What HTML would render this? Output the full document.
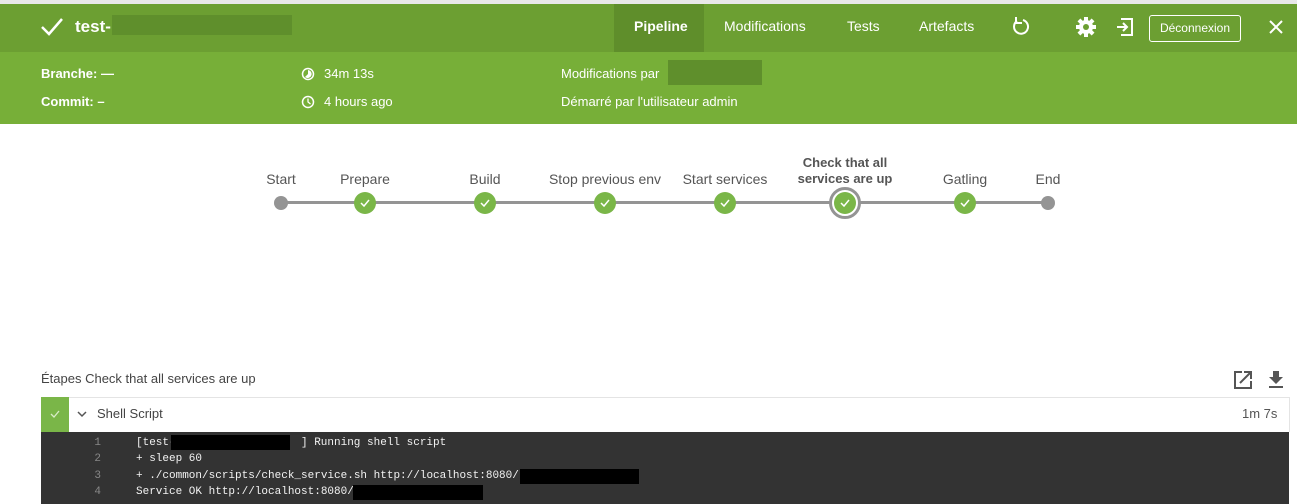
<!DOCTYPE html>
<html><head><meta charset="utf-8"><style>
body{margin:0;width:1297px;height:504px;overflow:hidden;background:#fff;font-family:"Liberation Sans",sans-serif;position:relative}
.a{position:absolute;white-space:nowrap}
.top{left:0;top:0;width:1297px;height:4px;background:#e8e8e8}
.hd{left:0;top:4px;width:1297px;height:48px;background:#6c9f32}
.sub{left:0;top:52px;width:1297px;height:72px;background:#77af38}
.w{color:#fff;font-size:14px}
.b{font-weight:bold}
.lbl{color:#555;font-size:14px;transform:translateX(-50%);text-align:center}
.dot{width:22px;height:22px;border-radius:50%;background:#7ab648;transform:translate(-50%,-50%)}
.dot svg{position:absolute;left:5px;top:5px}
.mono{font-family:"Liberation Mono",monospace;font-size:11px;color:#f2f2f2}
.ln{font-family:"Liberation Mono",monospace;font-size:11px;color:#888;text-align:right;width:20px}
.red{background:#000}
</style></head><body>
<div class="a top"></div>
<div class="a hd"></div>
<div class="a sub"></div>
<svg class="a" style="left:40px;top:17px" width="24" height="20"><path d="M2 10l7 7L22 2" stroke="#fff" stroke-width="2.5" fill="none"/></svg>
<div class="a w b" style="left:75px;top:17px;font-size:17px">test-</div>
<div class="a" style="left:112px;top:15px;width:180px;height:20px;background:#5f8f2c"></div>
<div class="a" style="left:614px;top:4px;width:90px;height:48px;background:#5f8e2b"></div>
<div class="a w b" style="left:634px;top:18px">Pipeline</div>
<div class="a w" style="left:724px;top:18px">Modifications</div>
<div class="a w" style="left:847px;top:18px">Tests</div>
<div class="a w" style="left:919px;top:18px">Artefacts</div>
<svg class="a" style="left:1011px;top:16px" width="20" height="22"><path d="M6 5A7 7 0 1 0 12 4" stroke="#fff" stroke-width="2" fill="none"/><path d="M5 1v6h6" stroke="#fff" stroke-width="2" fill="none"/></svg>
<svg class="a" style="left:1076px;top:17px" width="20" height="20" viewBox="0 0 20 20"><g fill="#fff"><circle cx="10" cy="10" r="7"/><rect x="8" y="0" width="4" height="20"/><rect x="0" y="8" width="20" height="4"/><rect x="8" y="0" width="4" height="20" transform="rotate(45 10 10)"/><rect x="8" y="0" width="4" height="20" transform="rotate(-45 10 10)"/></g><circle cx="10" cy="10" r="3" fill="#6c9f32"/></svg>
<svg class="a" style="left:1115px;top:17px" width="20" height="20"><path d="M6 2h11v16H6M2 10h10M8 6l4 4-4 4" stroke="#fff" stroke-width="2" fill="none"/></svg>
<div class="a" style="left:1149px;top:15px;width:90px;height:25px;border:1px solid #fff;border-radius:3px;color:#fff;font-size:12px;text-align:center;line-height:25px">Déconnexion</div>
<svg class="a" style="left:1268px;top:19px" width="16" height="16"><path d="M2 2l12 12M14 2L2 14" stroke="#fff" stroke-width="2"/></svg>
<div class="a w b" style="left:41px;top:66px;font-size:13px">Branche: —</div>
<div class="a w b" style="left:41px;top:94px;font-size:13px">Commit: –</div>
<svg class="a" style="left:301px;top:67px" width="14" height="14"><circle cx="7" cy="7" r="5.5" stroke="#fff" stroke-width="1.5" fill="none"/><path d="M7 7V3A4 4 0 1 1 4 10z" fill="#fff"/></svg>
<div class="a w" style="left:324px;top:66px;font-size:13px">34m 13s</div>
<svg class="a" style="left:301px;top:95px" width="14" height="14"><circle cx="7" cy="7" r="5.5" stroke="#fff" stroke-width="1.5" fill="none"/><path d="M7 3.5V7l2.5 2" stroke="#fff" stroke-width="1.3" fill="none"/></svg>
<div class="a w" style="left:324px;top:94px;font-size:13px">4 hours ago</div>
<div class="a w" style="left:561px;top:66px;font-size:13px">Modifications par</div>
<div class="a" style="left:668px;top:60px;width:94px;height:25px;background:#5f8f2c"></div>
<div class="a w" style="left:561px;top:94px;font-size:13px">Démarré par l'utilisateur admin</div>

<div class="a" style="left:281px;top:201px;width:767px;height:3px;background:#949494"></div>
<div class="a lbl" style="left:281px;top:171px">Start</div>
<div class="a lbl" style="left:365px;top:171px">Prepare</div>
<div class="a lbl" style="left:485px;top:171px">Build</div>
<div class="a lbl" style="left:605px;top:171px">Stop previous env</div>
<div class="a lbl" style="left:725px;top:171px">Start services</div>
<div class="a lbl b" style="left:845px;top:155px;font-size:13px;line-height:16px">Check that all<br>services are up</div>
<div class="a lbl" style="left:965px;top:171px">Gatling</div>
<div class="a lbl" style="left:1048px;top:171px">End</div>
<div class="a" style="left:274px;top:196px;width:14px;height:14px;border-radius:50%;background:#949494"></div>
<div class="a" style="left:1041px;top:196px;width:14px;height:14px;border-radius:50%;background:#949494"></div>
<div class="a dot" style="left:365px;top:203px"><svg width="12" height="12"><path d="M2 6l3 3 5-6" stroke="#fff" stroke-width="1.5" fill="none"/></svg></div>
<div class="a dot" style="left:485px;top:203px"><svg width="12" height="12"><path d="M2 6l3 3 5-6" stroke="#fff" stroke-width="1.5" fill="none"/></svg></div>
<div class="a dot" style="left:605px;top:203px"><svg width="12" height="12"><path d="M2 6l3 3 5-6" stroke="#fff" stroke-width="1.5" fill="none"/></svg></div>
<div class="a dot" style="left:725px;top:203px"><svg width="12" height="12"><path d="M2 6l3 3 5-6" stroke="#fff" stroke-width="1.5" fill="none"/></svg></div>
<div class="a dot" style="left:965px;top:203px"><svg width="12" height="12"><path d="M2 6l3 3 5-6" stroke="#fff" stroke-width="1.5" fill="none"/></svg></div>
<div class="a" style="left:829px;top:187px;width:26px;height:26px;border-radius:50%;border:3px solid #949494;background:#fff"></div>
<div class="a dot" style="left:845px;top:203px;width:22px;height:22px"><svg width="12" height="12"><path d="M2 6l3 3 5-6" stroke="#fff" stroke-width="1.5" fill="none"/></svg></div>

<div class="a" style="left:41px;top:371px;font-size:13px;color:#444">Étapes Check that all services are up</div>
<svg class="a" style="left:1234px;top:371px" width="18" height="18"><path d="M8 1H1v16h16v-7" stroke="#555" stroke-width="2" fill="none"/><path d="M6 12L16 2M10 1h7v7" stroke="#555" stroke-width="2" fill="none"/></svg>
<svg class="a" style="left:1268px;top:370px" width="16" height="19"><path d="M5 1h6v6h4l-7 7-7-7h4z" fill="#555"/><rect x="1" y="16" width="14" height="2" fill="#555"/></svg>
<div class="a" style="left:41px;top:397px;width:1247px;height:34px;border:1px solid #e4e4e4;border-bottom:none"></div>
<div class="a" style="left:41px;top:397px;width:28px;height:35px;background:#7ab648"></div>
<svg class="a" style="left:49px;top:408px" width="12" height="12"><path d="M2 6l3 3 5-6" stroke="#d9ecc7" stroke-width="1.3" fill="none"/></svg>
<svg class="a" style="left:77px;top:410px" width="10" height="8"><path d="M1 2l4 4 4-4" stroke="#555" stroke-width="1.5" fill="none"/></svg>
<div class="a" style="left:97px;top:406px;font-size:13px;color:#444">Shell Script</div>
<div class="a" style="left:1242px;top:406px;font-size:13px;color:#555">1m 7s</div>
<div class="a" style="left:41px;top:432px;width:1248px;height:72px;background:#333"></div>
<div class="a ln" style="left:81px;top:437px">1</div>
<div class="a ln" style="left:81px;top:453px">2</div>
<div class="a ln" style="left:81px;top:470px">3</div>
<div class="a ln" style="left:81px;top:486px">4</div>
<div class="a mono" style="left:136px;top:437px">[test-</div>
<div class="a mono" style="left:301px;top:437px">] Running shell script</div>
<div class="a red" style="left:171px;top:435px;width:119px;height:15px"></div>
<div class="a mono" style="left:136px;top:453px">+ sleep 60</div>
<div class="a mono" style="left:136px;top:470px">+ ./common/scripts/check_service.sh http://localhost:8080/</div>
<div class="a red" style="left:520px;top:469px;width:119px;height:15px"></div>
<div class="a mono" style="left:136px;top:486px">Service OK http://localhost:8080/</div>
<div class="a red" style="left:353px;top:485px;width:130px;height:15px"></div>
</body></html>
